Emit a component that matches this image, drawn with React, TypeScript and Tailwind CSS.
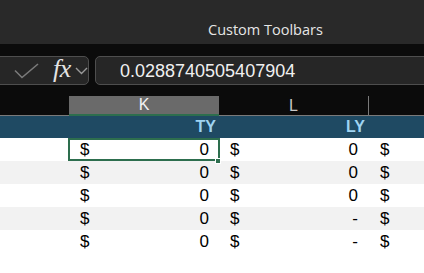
import React from "react";

const rows = [
  { ty: "0", ly: "0", bg: "bg-white" },
  { ty: "0", ly: "0", bg: "bg-[#f2f2f2]" },
  { ty: "0", ly: "0", bg: "bg-white" },
  { ty: "0", ly: "-", bg: "bg-[#f2f2f2]" },
  { ty: "0", ly: "-", bg: "bg-white" },
];

export default function App() {
  return (
    <div className="w-[424px] h-[273px] overflow-hidden bg-white font-['Liberation_Sans',Arial,sans-serif]">
      {/* title bar */}
      <div className="h-[44px] bg-[#292929] flex items-end pl-[208px] pb-[7px]">
        <span className="text-[14.5px] text-[#e6e6e6] font-['Open_Sans',sans-serif] leading-none">
          Custom Toolbars
        </span>
      </div>

      {/* formula bar */}
      <div className="h-[52px] bg-[#0b0b0b] flex pt-[12px] pb-[11px]">
        <div className="w-[99px] -ml-[10px] h-[29px] rounded-[5px] border border-[#4e4e4e] bg-[#262626] flex items-center">
          <svg width="26" height="16" viewBox="0 0 26 16" className="ml-[23px]">
            <path d="M1 7.5 L8 14.5 L24 1" fill="none" stroke="#7a7a7a" strokeWidth="1.6" />
          </svg>
          <span className="ml-[13px] text-[26px] italic text-[#e4e4e4] font-['Liberation_Serif',serif] leading-none -mt-[3px] tracking-[-0.5px]">
            fx
          </span>
          <svg width="13" height="8" viewBox="0 0 13 8" className="ml-[4px]">
            <path d="M1 1 L6.5 6.5 L12 1" fill="none" stroke="#9a9a9a" strokeWidth="1.4" />
          </svg>
        </div>
        <div className="ml-[6px] flex-1 -mr-[10px] h-[29px] rounded-[5px] border border-[#4e4e4e] bg-[#262626] flex items-center pl-[24px]">
          <span className="text-[18px] text-[#f0f0f0] leading-none">0.0288740505407904</span>
        </div>
      </div>

      {/* column headers */}
      <div className="h-[20px] bg-[#0b0b0b] flex">
        <div className="w-[69px] border-b border-[#7a7a7a]" />
        <div className="w-[150px] bg-[#6a6a6a] border-b-2 border-[#2d6e4e] flex items-center justify-center">
          <span className="text-[16px] text-[#f2f2f2] leading-none">K</span>
        </div>
        <div className="w-[150px] border-b border-r border-[#7a7a7a] flex items-center justify-center">
          <span className="text-[16px] text-[#c8c8c8] leading-none">L</span>
        </div>
        <div className="flex-1 border-b border-[#7a7a7a]" />
      </div>

      {/* blue header row */}
      <div className="h-[22px] bg-[#1f4a63] flex items-center">
        <div className="w-[69px]" />
        <div className="w-[150px] text-right pr-[3px] text-[16px] font-bold text-[#9fd4f2]">TY</div>
        <div className="w-[150px] text-right pr-[4px] text-[16px] font-bold text-[#9fd4f2]">LY</div>
      </div>

      {/* data rows */}
      {rows.map((r, i) => (
        <div key={i} className={`h-[23px] flex items-center text-[17px] text-black ${r.bg}`}>
          <div className="w-[69px]" />
          <div className="relative w-[150px] h-full flex items-center justify-between pl-[11px] pr-[10px]">
            <span>$</span>
            <span>{r.ty}</span>
            {i === 0 && (
              <>
                <div className="absolute -left-[1px] -right-[1px] top-0 bottom-0 border-2 border-[#2d6e4e]" />
                <div className="absolute -right-[2px] -bottom-[3px] w-[6px] h-[6px] bg-[#2d6e4e] border border-white" />
              </>
            )}
          </div>
          <div className="w-[150px] h-full flex items-center justify-between pl-[11px] pr-[11px]">
            <span>$</span>
            <span>{r.ly}</span>
          </div>
          <div className="pl-[11px]">$</div>
        </div>
      ))}
    </div>
  );
}
